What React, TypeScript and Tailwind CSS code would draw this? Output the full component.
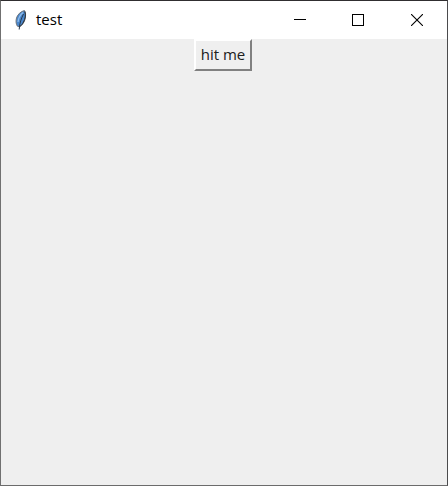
import React from 'react';

function FeatherIcon() {
  return (
    <svg viewBox="0 0 12 20" className="h-5 w-3" aria-hidden="true">
      <path d="M9.500 .6C6 1.200 2.500 4.500 1.500 8c-.8 3-.6 6 .9 8.200l2.200 .6C7.500 15 9.500 12 10.200 8.500 10.800 5 10.800 2.500 9.500 .6Z" fill="#4a87cc" stroke="#70757b" strokeWidth="1" />
      <path d="M8 2.500C5 5 3.400 8 3 12" fill="none" stroke="#91bdeb" strokeWidth="1.200" />
      <path d="M9.800 1.500C11 5 10.200 9 8.500 12 7.500 14 6 15.800 4.800 16.500" fill="none" stroke="#252a31" strokeWidth="1" />
      <path d="M8.500 4C6.500 8 4.500 13 4.200 19.500" fill="none" stroke="#25384f" strokeWidth="1" />
    </svg>
  );
}

function TitleBar() {
  return (
    <header className="flex h-[38px] items-center bg-white pl-3.5 text-black">
      <FeatherIcon />
      <h1 className="ml-[9px] flex-1 pb-0.5 text-[15px] leading-5">test</h1>
      <div className="flex h-full">
        <button type="button" aria-label="Minimize" className="flex w-[58px] items-center justify-center">
          <svg width="12" height="12" shapeRendering="crispEdges"><path d="M0 5.500H12" stroke="black" /></svg>
        </button>
        <button type="button" aria-label="Maximize" className="flex w-[58px] items-center justify-center">
          <svg width="12" height="12" shapeRendering="crispEdges"><rect x=".5" y=".5" width="11" height="11" fill="none" stroke="black" /></svg>
        </button>
        <button type="button" aria-label="Close" className="flex w-[60px] items-center justify-center">
          <svg width="12" height="12"><path d="M0 0L12 12M12 0L0 12" stroke="black" strokeWidth="1.100" /></svg>
        </button>
      </div>
    </header>
  );
}

export default function App() {
  return (
    <div className="flex min-h-screen flex-col border border-t-[#302e30] border-r-[#4b4b4d] border-b-[#6b6b6b] border-l-[#707070] bg-[#efefef] font-['Open_Sans','Noto_Sans',sans-serif]">
      <TitleBar />
      <main className="flex flex-1 flex-col items-center pr-0.5">
        <button type="button" className="h-8 w-[58px] border-2 border-t-white border-r-[#808080] border-b-[#808080] border-l-white bg-[#efefef] pb-0.5 text-[15px] leading-5 whitespace-nowrap text-[#202020]">
          hit me
        </button>
      </main>
    </div>
  );
}
